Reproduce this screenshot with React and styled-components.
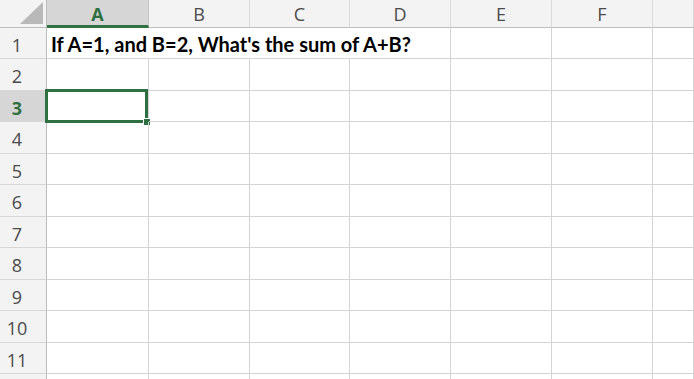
import React from "react";
import styled, { createGlobalStyle } from "styled-components";

const columns = ["A", "B", "C", "D", "E", "F", ""];
// 11 numbered rows plus the top sliver of row 12 at the window edge
const rowHeights = [31, 32, 31, 32, 31, 32, 31, 32, 31, 32, 31, 32];
const selectedCol = "A";
const selectedRow = 3;

const App = () => {
	return (
		<>
			<GlobalStyle />
			<Sheet>
				<Corner>
					<svg width="46" height="27" viewBox="0 0 46 27">
						<polygon points="20,24 43,24 43,2" fill="#b9b9b9" />
					</svg>
				</Corner>
				{columns.map((c, i) => (
					<ColHeader key={"h" + i} $selected={c === selectedCol}>
						{c}
					</ColHeader>
				))}

				{rowHeights.map((_, r) => {
					const row = r + 1;
					return (
						<React.Fragment key={row}>
							<RowHeader $selected={row === selectedRow}>
								{row <= 11 ? row : ""}
							</RowHeader>
							{row === 1 ? (
								<>
									<Cell $span={4}>
										<CellText>If A=1, and B=2, What's the sum of A+B?</CellText>
									</Cell>
									<Cell />
									<Cell />
									<Cell />
								</>
							) : (
								columns.map((c, i) => (
									<Cell key={c + i}>
										{row === selectedRow && c === selectedCol && (
											<Selection>
												<FillHandle />
											</Selection>
										)}
									</Cell>
								))
							)}
						</React.Fragment>
					);
				})}
			</Sheet>
		</>
	);
};

export default App;

const GlobalStyle = createGlobalStyle`
	html, body {
		margin: 0;
		padding: 0;
		background: #ffffff;
		overflow: hidden;
	}
`;

const Sheet = styled.div`
	display: grid;
	grid-template-columns: 47px 102px 101px 100px 101px 101px 101px 1fr;
	grid-template-rows: 28px ${rowHeights.map((h) => h + "px").join(" ")};
	width: 694px;
	height: 379px;
	overflow: hidden;
	font-family: "Open Sans", "Noto Sans", sans-serif;
`;

const Corner = styled.div`
	background: #f3f3f3;
	border-right: 1px solid #bdbdbd;
	border-bottom: 1px solid #bdbdbd;
	box-sizing: border-box;
	svg {
		display: block;
	}
`;

const ColHeader = styled.div`
	display: flex;
	align-items: center;
	justify-content: center;
	box-sizing: border-box;
	background: ${({ $selected }) => ($selected ? "#d6d6d6" : "#f3f3f3")};
	border-right: 1px solid ${({ $selected }) => ($selected ? "#c4c4c4" : "#d9d9d9")};
	border-bottom: ${({ $selected }) => ($selected ? "3px solid #2f7042" : "1px solid #bdbdbd")};
	padding-top: ${({ $selected }) => ($selected ? "2px" : "0")};
	color: ${({ $selected }) => ($selected ? "#2f7042" : "#4a4a4a")};
	font-weight: ${({ $selected }) => ($selected ? 700 : 400)};
	font-size: 18px;
`;

const RowHeader = styled.div`
	display: flex;
	align-items: center;
	justify-content: center;
	box-sizing: border-box;
	padding: 3px 12px 0 0;
	background: ${({ $selected }) => ($selected ? "#d6d6d6" : "#f3f3f3")};
	border-right: 1px solid #bdbdbd;
	border-bottom: 1px solid #d7d7d7;
	color: ${({ $selected }) => ($selected ? "#2f7042" : "#4a4a4a")};
	font-weight: ${({ $selected }) => ($selected ? 700 : 400)};
	font-size: 18px;
`;

const Cell = styled.div`
	position: relative;
	box-sizing: border-box;
	grid-column: span ${({ $span }) => $span || 1};
	border-right: 1px solid #d4d4d4;
	border-bottom: 1px solid #d4d4d4;
	display: flex;
	align-items: flex-end;
	min-width: 0;
`;

const CellText = styled.span`
	padding: 0 0 2px 4px;
	white-space: nowrap;
	font-family: "Lato", "Open Sans", sans-serif;
	font-weight: 700;
	font-size: 20px;
	color: #000000;
	line-height: 24px;
`;

const Selection = styled.div`
	position: absolute;
	top: -2px;
	left: -2px;
	right: 0;
	bottom: -2px;
	border: 3px solid #2f7042;
`;

const FillHandle = styled.div`
	position: absolute;
	right: -6px;
	bottom: -6px;
	width: 6px;
	height: 6px;
	background: #2f7042;
	border: 1px solid #ffffff;
`;
